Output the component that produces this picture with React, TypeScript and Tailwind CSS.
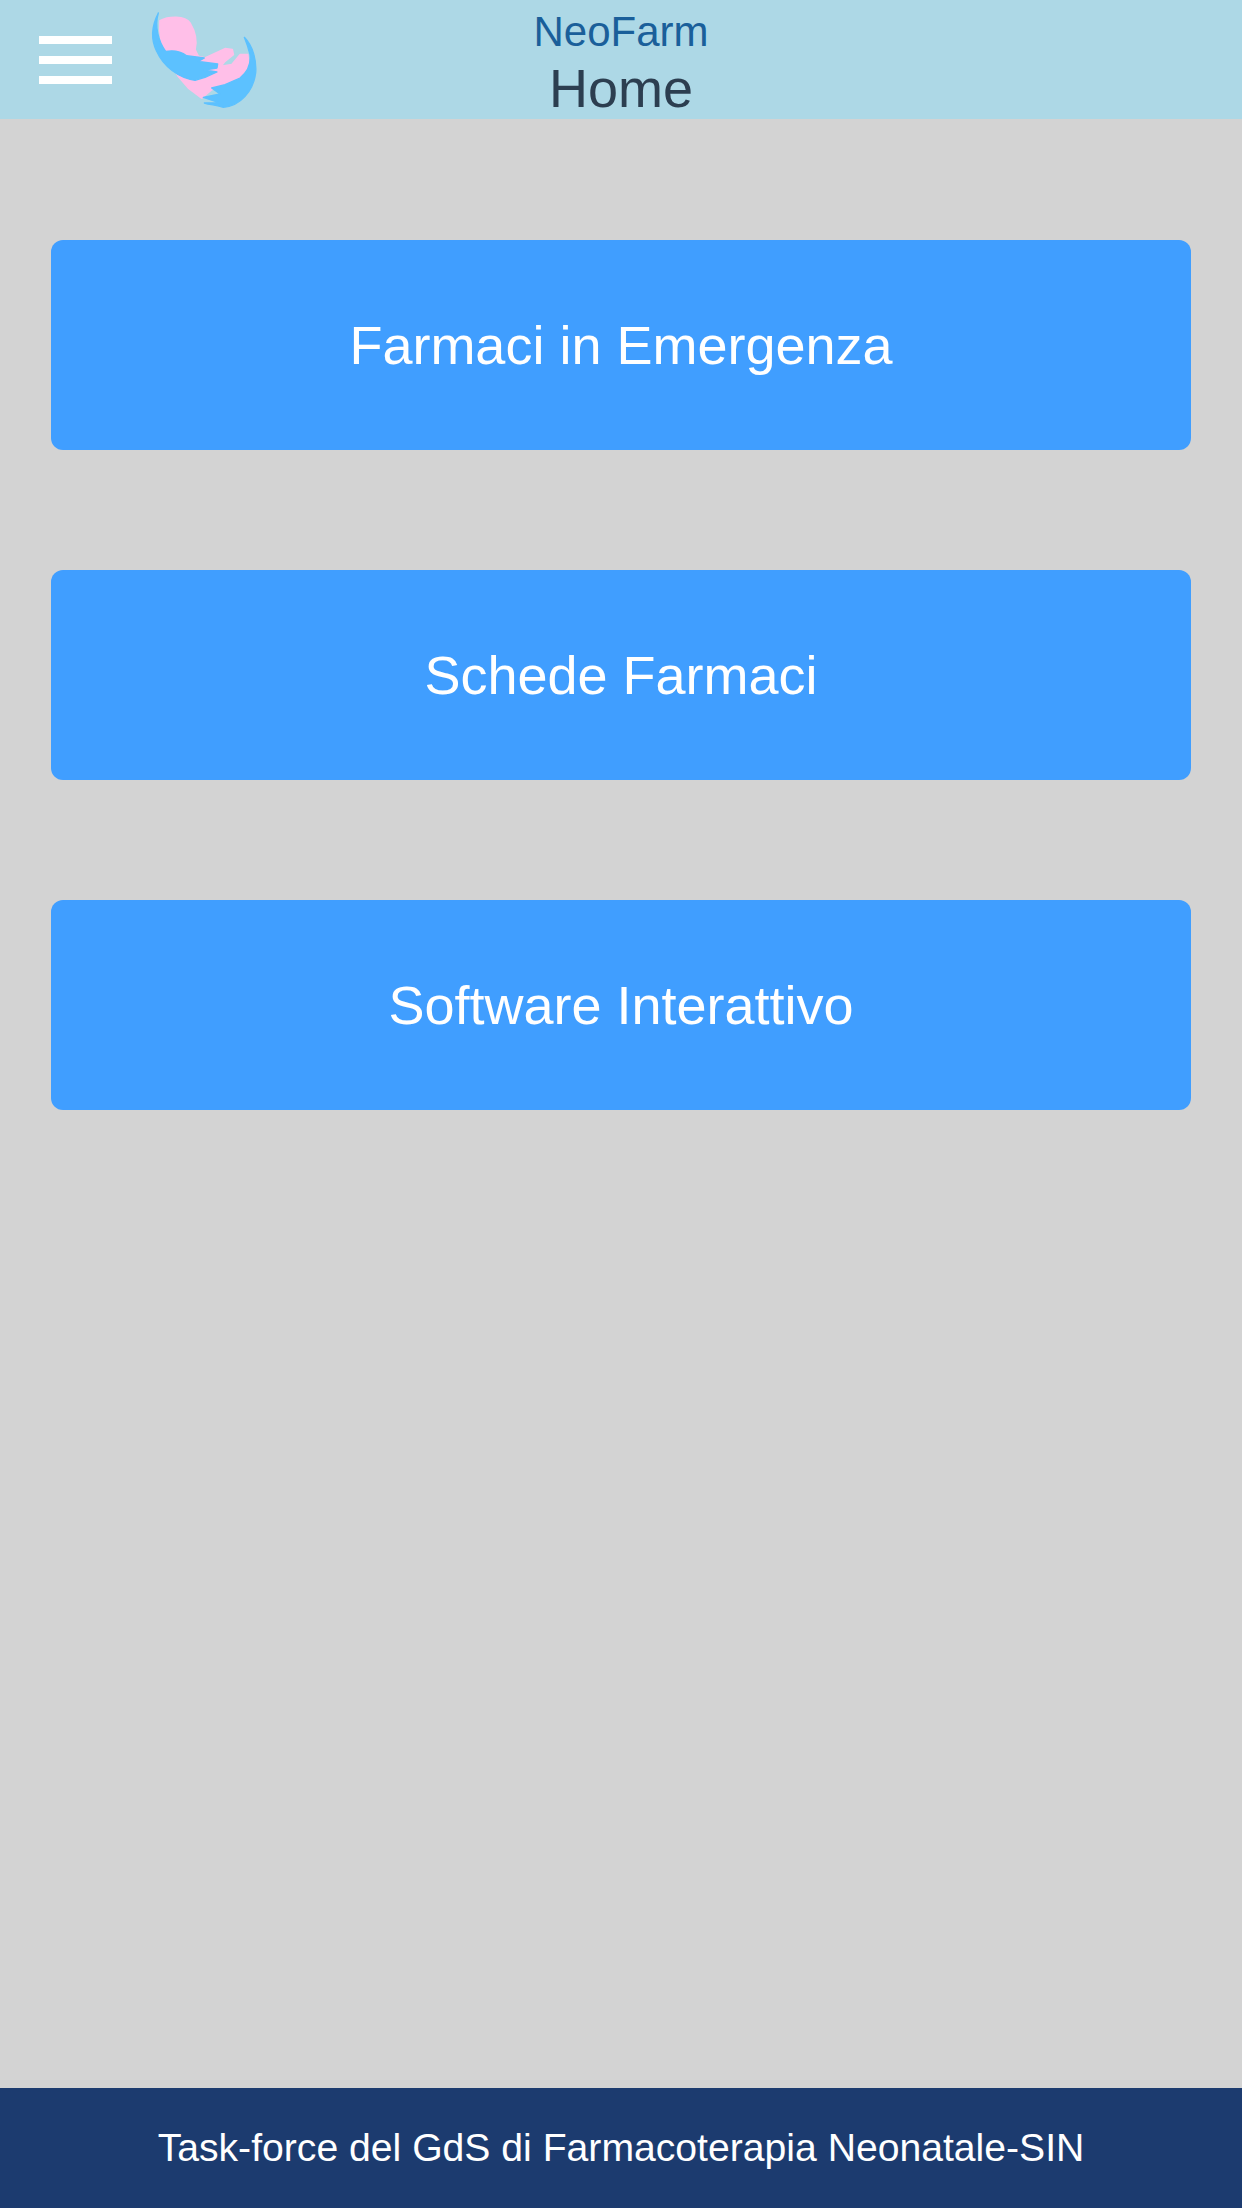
export default function App() {
  const buttons = ["Farmaci in Emergenza", "Schede Farmaci", "Software Interattivo"];
  return (
    <div className="flex h-[2208px] w-[1242px] flex-col bg-[#d3d3d3] font-['Liberation_Sans',Arial,sans-serif]">
      <header className="grid h-[119px] shrink-0 grid-cols-[1fr_auto_1fr] bg-[#add8e6]">
        <div className="flex">
          <div className="ml-[39px] mt-[36px] flex h-[48px] w-[73px] flex-col justify-between">
            <span className="block h-[8px] bg-white" />
            <span className="block h-[8px] bg-white" />
            <span className="block h-[8px] bg-white" />
          </div>
          <svg className="ml-[33px] mt-[8px] block h-[104px] w-[120px]" viewBox="0 0 360 312" aria-label="logo" strokeLinejoin="round">
            <path fill="#ffbfe8" stroke="#ffbfe8" strokeWidth="5" d="M45 38 C70 25 120 22 135 45 C150 70 158 95 150 125 L160 145 L180 150 L240 122 L262 125 L265 140 L240 160 L228 175 L260 170 L285 140 L308 140 L312 170 L290 205 L200 245 L170 270 L130 240 L100 205 L60 135 C50 115 42 75 45 38 Z" />
            <path fill="#5cc1ff" stroke="#5cc1ff" strokeWidth="4" d="M40 15 C22 50 15 90 35 130 C55 175 100 210 150 217 L180 208 L216 192 L178 186 L216 180 L218 168 L160 160 L178 150 L125 143 C105 128 85 126 62 130 C40 100 28 55 40 15 Z" />
            <path fill="#5cc1ff" stroke="#5cc1ff" strokeWidth="4" d="M298 88 C325 115 335 160 332 195 C325 250 285 295 235 298 C215 292 195 290 178 285 L222 284 L175 268 L225 258 L200 240 L240 230 L285 210 C310 190 318 165 315 140 C310 120 305 105 298 88 Z" />
          </svg>
        </div>
        <div className="flex flex-col items-center">
          <span className="mt-[8px] text-[42px] leading-[48px] text-[#1a5f9a]">NeoFarm</span>
          <span className="mt-[2px] text-[54px] leading-[60px] text-[#2c3e50]">Home</span>
        </div>
        <div />
      </header>
      <main className="flex flex-1 flex-col gap-[120px] px-[51px] pt-[121px]">
        {buttons.map((label) => (
          <button
            key={label}
            className="flex h-[210px] items-center justify-center rounded-[12px] bg-[#409eff] text-[54px] text-white"
          >
            {label}
          </button>
        ))}
      </main>
      <footer className="flex h-[120px] shrink-0 items-center justify-center bg-[#1c3b6f] text-[39.15px] text-white">
        Task-force del GdS di Farmacoterapia Neonatale-SIN
      </footer>
    </div>
  );
}
